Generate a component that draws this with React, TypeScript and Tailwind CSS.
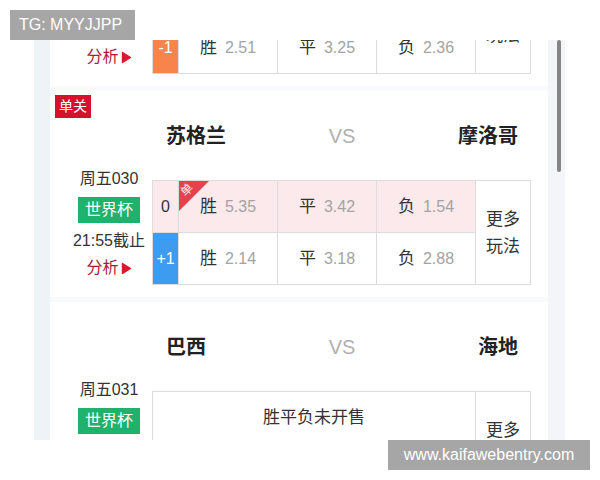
type Tone = "plain" | "orange" | "blue";

type OddsRow = {
  h: string;
  tone: Tone;
  pink?: boolean;
  dan?: boolean;
  odds: [string, string, string];
};

type Match = {
  no: string;
  deadline: string;
  rows: OddsRow[];
};

const FONT = { fontFamily: '"Liberation Sans", "Noto Sans CJK SC", sans-serif' };

const LABELS = ["胜", "平", "负"];

const toneClass: Record<Tone, string> = {
  plain: "text-[#333]",
  orange: "bg-[#f7854b] text-white",
  blue: "bg-[#3d9cef] text-white",
};

function SideInfo({ m }: { m: Match }) {
  return (
    <div className="w-[102px] shrink-0 pl-4 mt-[-11px] flex flex-col items-center text-[16px] text-[#333]">
      <div className="leading-[20px]">{m.no}</div>
      <div className="mt-2 h-[26px] px-[7px] bg-[#1fb26c] text-white leading-[26px]">世界杯</div>
      <div className="mt-2 leading-[20px]">{m.deadline}</div>
      <div className="mt-[7px] leading-[20px] text-[#a81e3a] flex items-center">
        分析
        <svg width="11" height="13" viewBox="0 0 11 13" className="ml-[2px]">
          <path d="M1.5 1.5 L9.5 6.5 L1.5 11.5 Z" fill="#d8192e" stroke="#d8192e" strokeLinejoin="round" strokeWidth="1.4" />
        </svg>
      </div>
    </div>
  );
}

function MoreCell({ lines }: { lines: string[] }) {
  return (
    <div className="col-start-5 row-start-1 row-span-2 border-l border-t border-[#dcdcdc] flex flex-col items-center justify-center text-[17px] leading-[27px] text-[#333]">
      {lines.map((l) => (
        <div key={l}>{l}</div>
      ))}
    </div>
  );
}

function OddsGrid({ rows }: { rows: OddsRow[] }) {
  return (
    <div className="grid grid-cols-[26px_99px_99px_99px_55px] grid-rows-[52px_52px] border-r border-b border-[#dcdcdc] w-[379px]">
      {rows.map((r, i) => (
        <div key={i} className="contents">
          <div
            className={`border-l border-t border-[#dcdcdc] flex items-center justify-center text-[16px] ${toneClass[r.tone]} ${
              r.tone === "plain" && r.pink ? "bg-[#fbe9eb]" : ""
            }`}
          >
            {r.h}
          </div>
          {r.odds.map((o, j) => (
            <div
              key={j}
              className={`relative border-l border-t border-[#dcdcdc] flex items-center justify-center gap-2 ${r.pink ? "bg-[#fbe9eb]" : "bg-white"}`}
            >
              {r.dan && j === 0 && (
                <div className="absolute left-0 top-0 w-[30px] h-[30px] bg-[#e5424d] [clip-path:polygon(0_0,100%_0,0_100%)]">
                  <span className="absolute left-[2px] top-[2px] text-[12px] leading-[14px] text-white/90 -rotate-45">单</span>
                </div>
              )}
              <span className="text-[17px] text-[#333]">{LABELS[j]}</span>
              <span className="text-[16px] text-[#a3a3a3]">{o}</span>
            </div>
          ))}
        </div>
      ))}
      <MoreCell lines={["更多", "玩法"]} />
    </div>
  );
}

function Teams({ home, away }: { home: string; away: string }) {
  return (
    <div className="ml-[116px] mr-[30px] h-[40px] flex items-center">
      <div className="flex-1 text-[20px] font-bold text-[#222]">{home}</div>
      <div className="text-[20px] text-[#b0b0b0]">VS</div>
      <div className="flex-1 text-right text-[20px] font-bold text-[#222]">{away}</div>
    </div>
  );
}

const prev: Match = {
  no: "周五029",
  deadline: "21:55截止",
  rows: [
    { h: "0", tone: "plain", odds: ["3.10", "3.05", "2.20"] },
    { h: "-1", tone: "orange", odds: ["2.51", "3.25", "2.36"] },
  ],
};

const scotland: Match = {
  no: "周五030",
  deadline: "21:55截止",
  rows: [
    { h: "0", tone: "plain", pink: true, dan: true, odds: ["5.35", "3.42", "1.54"] },
    { h: "+1", tone: "blue", odds: ["2.14", "3.18", "2.88"] },
  ],
};

export default function App() {
  return (
    <div className="relative w-[600px] h-[480px] bg-white pt-[40px] pl-[34px]" style={FONT}>
      <div className="w-[531px] h-[400px] overflow-hidden flex">
        <div className="w-[16px] shrink-0 bg-[#eef3f7]" />

        <div className="w-[498px] shrink-0 bg-[#f9fafb] flex flex-col gap-[5px]">
          {/* previous match, scrolled mostly out of view */}
          <div className="bg-white mt-[-71px] pb-3 flex">
            <SideInfo m={prev} />
            <OddsGrid rows={prev.rows} />
          </div>

          <div className="relative bg-white pt-[25px] pb-3">
            <div className="absolute left-[5px] top-[4px] h-[23px] px-[4px] bg-[#d7112b] text-white text-[14px] leading-[23px]">单关</div>
            <Teams home="苏格兰" away="摩洛哥" />
            <div className="mt-[24px] flex">
              <SideInfo m={scotland} />
              <OddsGrid rows={scotland.rows} />
            </div>
          </div>

          <div className="bg-white pt-[25px] pb-3">
            <Teams home="巴西" away="海地" />
            <div className="mt-[24px] flex">
              <SideInfo m={{ no: "周五031", deadline: "21:55截止", rows: [] }} />
              <div className="grid grid-cols-[323px_55px] grid-rows-[52px_52px] border-r border-b border-[#dcdcdc] w-[379px]">
                <div className="border-l border-t border-[#dcdcdc] flex items-center justify-center text-[17px] text-[#333]">
                  胜平负未开售
                </div>
                <div className="col-start-1 row-start-2 border-l border-t border-[#dcdcdc]" />
                <div className="col-start-2 row-start-1 row-span-2 border-l border-t border-[#dcdcdc] flex flex-col items-center justify-center text-[17px] leading-[27px] text-[#333]">
                  <div>更多</div>
                  <div>玩法</div>
                </div>
              </div>
            </div>
          </div>
        </div>

        <div className="w-[17px] shrink-0 bg-[#f3f5f8]">
          <div className="ml-[9px] w-[4px] h-[132px] rounded-full bg-[#858585]" />
        </div>
      </div>

      <div className="absolute left-[10px] top-[10px] w-[125px] h-[30px] bg-[#a6a6a6] text-white text-[16px] leading-[30px] pl-[9px]">
        TG: MYYJJPP
      </div>
      <div className="absolute left-[388px] top-[440px] w-[202px] h-[30px] bg-[#a6a6a6] text-white text-[16px] leading-[30px] text-center">
        www.kaifawebentry.com
      </div>
    </div>
  );
}
